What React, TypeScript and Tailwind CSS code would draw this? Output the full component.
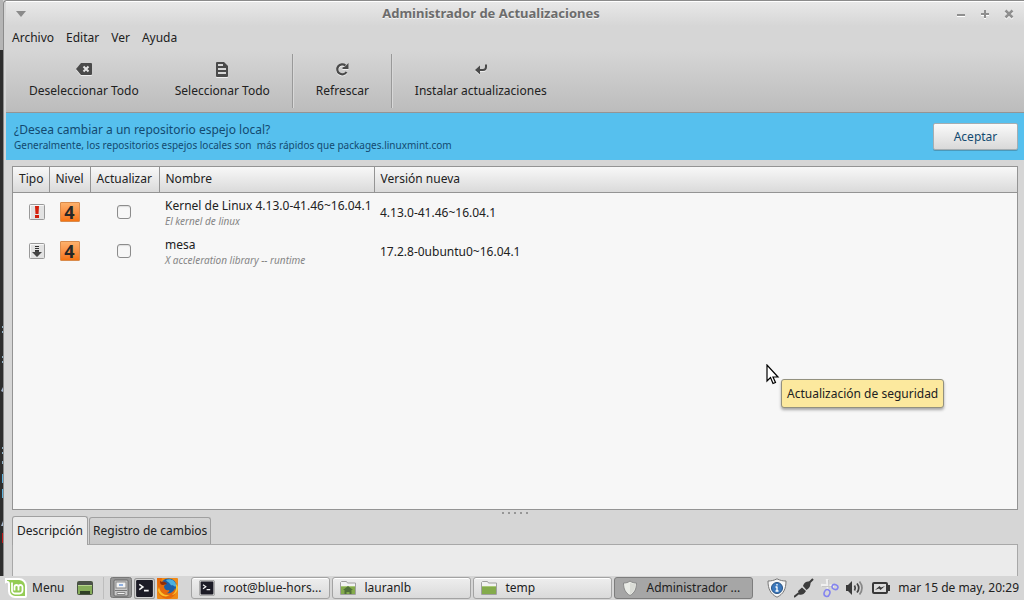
import { useState, type ReactNode } from "react";
import clsx from "clsx";

interface Update {
  id: string;
  kind: "security" | "package";
  level: number;
  name: string;
  description: string;
  version: string;
}

const MENUS = ["Archivo", "Editar", "Ver", "Ayuda"];

const UPDATES: Update[] = [
  {
    id: "linux-kernel",
    kind: "security",
    level: 4,
    name: "Kernel de Linux 4.13.0-41.46~16.04.1",
    description: "El kernel de linux",
    version: "4.13.0-41.46~16.04.1",
  },
  {
    id: "mesa",
    kind: "package",
    level: 4,
    name: "mesa",
    description: "X acceleration library -- runtime",
    version: "17.2.8-0ubuntu0~16.04.1",
  },
];

// ── Toolbar icons
const ClearIcon = () => (
  <svg width="16" height="16" viewBox="0 0 16 16" className="drop-shadow-[0_1px_0_#eeeeee]">
    <path d="M0 8 5 2h10a1 1 0 0 1 1 1v10a1 1 0 0 1-1 1H5z" fill="#4a4a4a" />
    <path d="m7.500 5.500 5 5m0-5-5 5" stroke="#e4e4e4" strokeWidth="2" />
  </svg>
);

const SelectIcon = () => (
  <svg width="16" height="16" viewBox="0 0 16 16" className="drop-shadow-[0_1px_0_#eeeeee]">
    <path d="M2 2a1 1 0 0 1 1-1h7l4 4v10a1 1 0 0 1-1 1H3a1 1 0 0 1-1-1z" fill="#4a4a4a" />
    <path d="M4 4h5M4 8h8M4 12h8" stroke="#d6d6d6" strokeWidth="2" />
  </svg>
);

const RefreshIcon = () => (
  <svg width="16" height="16" viewBox="0 0 16 16" className="drop-shadow-[0_1px_0_#eeeeee]">
    <path d="M11.500 4.500A5 5 0 1 0 12.500 11" fill="none" stroke="#4a4a4a" strokeWidth="2.200" />
    <path d="M14.500 2v6H8.500V6.500L11 5.500z" fill="#4a4a4a" />
  </svg>
);

const ReturnIcon = () => (
  <svg width="16" height="16" viewBox="0 0 16 16" className="drop-shadow-[0_1px_0_#eeeeee]">
    <path d="M13 3.500v2.500a3 3 0 0 1-3 3H5" fill="none" stroke="#4a4a4a" strokeWidth="2" />
    <path d="m2 9 5-4.500v9z" fill="#4a4a4a" />
  </svg>
);

// ── Update type icons
const SecurityIcon = () => (
  <svg width="16" height="16" viewBox="0 0 16 16" className="mx-auto">
    <rect x="0.500" y="0.500" width="15" height="15" rx="1" fill="#e2e2e2" stroke="#999" />
    <path d="M1.500 14.500v-13h13" fill="none" stroke="#f8f8f8" />
    <path d="M6 2h4l-.500 8h-3zM6 11h4v3H6z" fill="#d4200c" />
  </svg>
);

const PackageIcon = () => (
  <svg width="16" height="16" viewBox="0 0 16 16" className="mx-auto">
    <rect x="0.500" y="0.500" width="15" height="15" rx="1" fill="#e2e2e2" stroke="#999" />
    <path d="M1.500 14.500v-13h13" fill="none" stroke="#f8f8f8" />
    <path d="M6 3.500h4M6 5.500h4M6 7.500h4" stroke="#333" />
    <path d="M6 8h4v1h3l-5 5-5-5h3z" fill="#444" />
  </svg>
);

// ── Panel icons
const MintLogo = () => (
  <svg width="22" height="20" viewBox="0 0 22 20">
    <path d="M1 1h13a7 7 0 0 1 7 7v10a1 1 0 0 1-1 1H10a6 6 0 0 1-6-6V6a2 2 0 0 0-3-2z" fill="#94cc55" stroke="#fff" strokeWidth="2" />
    <path d="M7 4.500v8a3 3 0 0 0 3 3h4.500a3 3 0 0 0 3-3V9a2 2 0 0 0-4 0v3.500M13.500 9a2 2 0 0 0-4 0v3.500" fill="none" stroke="#fff" strokeWidth="1.800" />
  </svg>
);

const DesktopIcon = () => (
  <svg width="16" height="14" viewBox="0 0 16 14">
    <rect x="0.500" y="0.500" width="15" height="13" rx="1" fill="#86ad5a" stroke="#4a5344" />
    <path d="M1 1h14v3H1z" fill="#4b504a" />
    <path d="M1 4.500h14" stroke="#b7d48f" />
    <path d="M3 10h10v3H3z" fill="#2f4026" />
  </svg>
);

const FilesIcon = () => (
  <svg width="22" height="22" viewBox="0 0 22 22">
    <rect x="0.500" y="0.500" width="21" height="20" rx="2" fill="#959595" stroke="#787878" />
    <rect x="4" y="3" width="14" height="16" rx="1" fill="#c9c9c9" stroke="#666" />
    <rect x="6" y="5" width="10" height="6" fill="#f2f2f2" stroke="#888" />
    <path d="M9 7h4v2H9z" fill="#8fb0e0" />
    <path d="M5 13.500h12" stroke="#777" />
    <path d="M7 15.500h8v2H7z" fill="#f2f2f2" stroke="#888" />
  </svg>
);

const TerminalIcon = ({ size }: { size: number }) => (
  <svg width={size} height={size} viewBox="0 0 20 20">
    <rect x="0.500" y="0.500" width="19" height="19" rx="2" fill="#d2d2d2" stroke="#999" />
    <rect x="2" y="2" width="16" height="16" rx="1" fill="#1c1b26" />
    <path d="m5 6 3.500 2.500L5 11M9.500 12h4.500" fill="none" stroke="#f4f4f4" strokeWidth="1.500" />
  </svg>
);

const FirefoxIcon = () => (
  <svg width="21" height="21" viewBox="0 0 21 21">
    <rect width="21" height="21" rx="1" fill="#ef8a16" />
    <circle cx="11.500" cy="9" r="8.500" fill="#1c5fa8" />
    <path d="M9 2c4-2 9 0 10 5 0 2-1 2-2 1s-3 0-4-2-3-2-4-4z" fill="#4cb0e0" />
    <path d="M0 0h5L4 4c2-1 4 0 5 2L7 8c0 3 2 5 5 4 1 1-1 3-3 3 4 1 8-1 9-5 2 4 0 8-4 10S3 20 1 14z" fill="#e66a0c" />
    <path d="M2 9c1 6 6 9 11 8-4 3-11 1-12-5z" fill="#fbc22d" />
    <path d="M18 4c2 5 1 10-3 13 3 0 6-4 6-8z" fill="#fbc22d" />
    <path d="M3 3c0 3 1 4 3 4l4-1C8 3 6 4 5 4z" fill="#8d2c0c" />
  </svg>
);

const FolderIcon = ({ home }: { home?: boolean }) => (
  <svg width="16" height="16" viewBox="0 0 16 16">
    <path d="M.500 14.500v-12l1-1h5l1 1.500h8v11.500z" fill="#f2f2f2" stroke="#a0a0a0" />
    <path d="M1 6h14v8H1z" fill="#84ab4c" />
    <path d="M1 6.500h14" stroke="#a9c878" />
    {home && <path d="m8 6-5 4h1.500v4h2v-2h3v2h2v-4H13z" fill="#50703a" />}
  </svg>
);

const ShieldIcon = () => (
  <svg width="16" height="16" viewBox="0 0 16 16">
    <path d="M8 1c2 1.500 4 2 6.500 2 0 6-2 10-6.500 12.500C3.500 13 1.500 9 1.500 3 4 3 6 2.500 8 1z" fill="#e9ebe6" stroke="#8a8a8a" />
    <path d="M8 2.500v12C11 12.500 13 9 13.500 4 11 4 9.500 3.500 8 2.500z" fill="#dadcd6" />
  </svg>
);

const InfoShieldIcon = () => (
  <svg width="20" height="20" viewBox="0 0 20 20">
    <path d="M10 .800c3 1.700 6 2.200 9 2.200 0 8-2.500 13-9 16.200C3.500 16 1 11 1 3c3 0 6-.500 9-2.200z" fill="#f6f6f6" stroke="#777" />
    <circle cx="10" cy="10" r="5.500" fill="#3b78bd" stroke="#285384" />
    <path d="M10 6v1.500M10 8.500v4.500M8.500 13h3M8.500 9H10" stroke="#fff" strokeWidth="1.300" />
  </svg>
);

const PlugIcon = () => (
  <svg width="20" height="20" viewBox="0 0 20 20">
    <path d="M0 19 5 15M15 5l4-4" stroke="#3c3c3c" strokeWidth="2" />
    <path d="m4 13 4-3.500 4 3.500c-2 4-5 4-7 3.500zM9 8c1-4 4-5 6.500-4.500l1 1.500c0 3-1 5-4 7z" fill="#3c3c3c" />
  </svg>
);

const ScissorsIcon = () => (
  <svg width="18" height="20" viewBox="0 0 18 20">
    <path d="m6 1 1 11M0 7l13 1" stroke="#f0f0f0" strokeWidth="2.500" />
    <path d="m7.500 2 .500 9M1 8.500h10" stroke="#c6c6c6" />
    <ellipse cx="14" cy="9" rx="3" ry="2.500" fill="none" stroke="#8484ef" strokeWidth="1.600" transform="rotate(20 14 9)" />
    <ellipse cx="6" cy="15" rx="2.800" ry="3.500" fill="none" stroke="#8484ef" strokeWidth="1.600" transform="rotate(20 6 15)" />
  </svg>
);

const VolumeIcon = () => (
  <svg width="19" height="16" viewBox="0 0 19 16">
    <path d="M0 5h2l4-4v14l-4-4H0z" fill="#3a3a3a" />
    <path d="M8.500 5.500q1.500 2.500 0 5M11 3.500q3.500 4.500 0 9" fill="none" stroke="#444" strokeWidth="1.700" />
    <path d="M13.500 1.500q5 6.500 0 13" fill="none" stroke="#888" strokeWidth="1.700" />
  </svg>
);

const BatteryIcon = () => (
  <svg width="19" height="14" viewBox="0 0 19 14">
    <rect x="1" y="2" width="14" height="10" rx="1" fill="#dcdcdc" stroke="#383838" strokeWidth="2" />
    <path d="M16 4h2v6h-2z" fill="#383838" />
    <path d="m3 9 4.500-4 1.500 1.500L13 5 8.500 9 7 7.500z" fill="#383838" />
  </svg>
);

// ── Strip of the terminal window left uncovered behind this one
const TerminalEdge = () => (
  <svg width="3" height="576" viewBox="0 0 3 576" className="shrink-0">
    <path d="M0 0h3v50H0z" fill="#b5b5b5" />
    <path d="M0 50h3v526H0z" fill="#2d2d2d" />
    <path d="M2 326h1v2H2zM2 331h1v2H2zM2 356h1v2H2zM2 361h1v2H2zM2 447h1v2H2zM2 452h1v2H2zM2 461h1v3H2z" fill="#8fb0c4" />
    <path d="M2 474h1v9H2zM2 489h1v9H2z" fill="#5fb3dd" />
    <path d="M1 391l2-4v5zM1 526l2-5v5z" fill="#a8b9cf" />
    <path d="M2 533h1v10H2z" fill="#c01818" />
  </svg>
);

const ToolButton = ({ icon, label }: { icon: ReactNode; label: string }) => (
  <button className="flex flex-col items-center gap-1.5 px-[18px] pt-[11px]">
    {icon}
    <span className="leading-4">{label}</span>
  </button>
);

const ToolSeparator = () => (
  <div className="mx-1 my-1 w-0.5 border-l border-[#999999] bg-[#d8d8d8]" />
);

const TaskButton = ({ icon, label, active }: { icon: ReactNode; label: string; active?: boolean }) => (
  <button
    className={clsx(
      "flex h-[22px] max-w-[139px] min-w-0 flex-1 items-center gap-2 rounded-[3px] border px-[7px]",
      active
        ? "border-[#7d7d7d] bg-[#a6a6a6]"
        : "border-[#a3a3a3] bg-linear-to-b from-[#eeeeee] to-[#dadada] shadow-[inset_0_1px_0_#ffffff]"
    )}
  >
    <span className="shrink-0">{icon}</span>
    <span className="whitespace-nowrap">{label}</span>
  </button>
);

export default function App() {
  const [selected, setSelected] = useState<string[]>([]);
  const [tab, setTab] = useState("Descripción");

  const toggle = (id: string) =>
    setSelected((prev) => (prev.includes(id) ? prev.filter((i) => i !== id) : [...prev, id]));

  return (
    <div className="relative flex h-screen flex-col overflow-hidden bg-[#d6d6d6] font-['Noto_Sans',sans-serif] text-[12px] text-[#212121]">
      <div className="flex min-h-0 flex-1">
        <TerminalEdge />
        <div className="flex min-w-0 flex-1 flex-col rounded-tl-[4px] border-t border-l border-[#8b8b8b] pl-0.5">
          {/* Title bar */}
          <header className="flex h-[25px] shrink-0 items-center border-t border-white bg-linear-to-b from-[#e8e8e8] to-[#d6d6d6] px-2.5">
            <button aria-label="Menú de la ventana">
              <svg width="10" height="6" viewBox="0 0 10 6">
                <path d="M0 0h10L5 6z" fill="#8a8a8a" />
              </svg>
            </button>
            <h1 className="flex-1 text-center text-[13px] font-bold text-[#6c6c6c] [text-shadow:0_1px_0_#f4f4f4]">
              Administrador de Actualizaciones
            </h1>
            <div className="flex gap-[14px] text-[#8f8f8f]">
              <button aria-label="Minimizar">
                <svg width="10" height="10" viewBox="0 0 10 10" className="drop-shadow-[0_1px_0_#ffffff]">
                  <path d="M1 6h8" stroke="currentColor" strokeWidth="2" />
                </svg>
              </button>
              <button aria-label="Maximizar">
                <svg width="10" height="10" viewBox="0 0 10 10" className="drop-shadow-[0_1px_0_#ffffff]">
                  <path d="M1 5h8M5 1v8" stroke="currentColor" strokeWidth="2" />
                </svg>
              </button>
              <button aria-label="Cerrar">
                <svg width="10" height="10" viewBox="0 0 10 10" className="drop-shadow-[0_1px_0_#ffffff]">
                  <path d="m1.500 1.500 7 7m0-7-7 7" stroke="currentColor" strokeWidth="2.500" />
                </svg>
              </button>
            </div>
          </header>

          {/* Menu bar */}
          <nav className="flex h-6 shrink-0 items-center gap-3 px-1.5">
            {MENUS.map((menu) => (
              <button key={menu}>{menu}</button>
            ))}
          </nav>

          {/* Toolbar */}
          <div className="flex h-[63px] shrink-0 items-stretch border-b border-[#949494] bg-linear-to-b from-[#d6d6d6] to-[#bcbcbc] px-[5px]">
            <ToolButton icon={<ClearIcon />} label="Deseleccionar Todo" />
            <ToolButton icon={<SelectIcon />} label="Seleccionar Todo" />
            <ToolSeparator />
            <ToolButton icon={<RefreshIcon />} label="Refrescar" />
            <ToolSeparator />
            <ToolButton icon={<ReturnIcon />} label="Instalar actualizaciones" />
          </div>

          {/* Mirror suggestion */}
          <div className="flex h-[47px] shrink-0 items-center justify-between bg-[#56c0ee] pr-1.5 pl-2 text-[#134a70]">
            <div className="leading-4">
              <p>¿Desea cambiar a un repositorio espejo local?</p>
              <p className="text-[10px] leading-[14px] whitespace-pre">
                Generalmente, los repositorios espejos locales son  más rápidos que packages.linuxmint.com
              </p>
            </div>
            <button className="h-[27px] w-[85px] rounded-[2px] border border-[#a5adb1] bg-linear-to-b from-[#fafafa] to-[#d9d9d9] shadow-[0_1px_0_#4b98b9]">
              Aceptar
            </button>
          </div>

          {/* Update list */}
          <div className="mx-1.5 mt-1.5 min-h-0 flex-1 border border-[#949494] bg-[#f7f7f7]">
            <table className="w-full table-fixed border-collapse text-left">
              <thead>
                <tr className="h-[25px] bg-linear-to-b from-[#f8f8f8] to-[#dadada] whitespace-nowrap">
                  <th className="w-9 border-r border-b border-[#949494] pl-1.5 font-normal">Tipo</th>
                  <th className="w-[41px] border-r border-b border-[#949494] pl-1.5 font-normal">Nivel</th>
                  <th className="w-[69px] border-r border-b border-[#949494] pl-1.5 font-normal">Actualizar</th>
                  <th className="w-[215px] border-r border-b border-[#949494] pl-1.5 font-normal">Nombre</th>
                  <th className="border-b border-[#949494] pl-1.5 font-normal">Versión nueva</th>
                </tr>
              </thead>
              <tbody>
                {UPDATES.map((update) => (
                  <tr key={update.id} className="h-[39px]">
                    <td className="pl-3">{update.kind === "security" ? <SecurityIcon /> : <PackageIcon />}</td>
                    <td>
                      <span className="mx-auto flex size-5 items-center justify-center rounded-[1px] border border-[#d98b4c] bg-linear-to-b from-[#fdb06a] to-[#f57410] text-[18px] leading-4 font-bold text-[#262626]">
                        {update.level}
                      </span>
                    </td>
                    <td className="pr-0.5">
                      <input
                        type="checkbox"
                        aria-label={`Actualizar ${update.name}`}
                        checked={selected.includes(update.id)}
                        onChange={() => toggle(update.id)}
                        className="mx-auto block size-3.5 appearance-none rounded-[3px] border border-[#8c8c8c] bg-[#f7f7f7] shadow-[inset_0_1px_1px_#dddddd] checked:bg-[#8bb158]"
                      />
                    </td>
                    <td className="pt-0.5 pl-1.5 leading-4 whitespace-nowrap">
                      <div>{update.name}</div>
                      <div className="text-[10px] leading-[14px] text-[#858585] italic">{update.description}</div>
                    </td>
                    <td className="pt-0.5 pl-1.5">{update.version}</td>
                  </tr>
                ))}
              </tbody>
            </table>
          </div>

          {/* Pane handle */}
          <div className="flex h-1.5 shrink-0 items-center justify-center gap-1">
            {[0, 1, 2, 3, 4].map((dot) => (
              <span key={dot} className="size-0.5 bg-[#969696]" />
            ))}
          </div>

          {/* Details notebook */}
          <div role="tablist" className="mx-1.5 flex h-7 shrink-0 items-end gap-px">
            {["Descripción", "Registro de cambios"].map((name) => (
              <button
                key={name}
                role="tab"
                aria-selected={tab === name}
                onClick={() => setTab(name)}
                className={clsx(
                  "rounded-t-[3px] border border-b-0 border-[#a0a0a0]",
                  tab === name
                    ? "relative -mb-px h-[29px] bg-[#ebebeb] px-1"
                    : "h-[27px] bg-linear-to-b from-[#d4d4d4] to-[#c8c8c8] px-[3px]"
                )}
              >
                {name}
              </button>
            ))}
          </div>
          <div role="tabpanel" aria-label={tab} className="mx-1.5 h-8 shrink-0 border border-b-0 border-[#a8a8a8] bg-[#ebebeb]" />
        </div>
      </div>

      {/* Desktop panel */}
      <footer className="flex h-6 shrink-0 items-center bg-[#d6d6d6] px-[5px]">
        <button className="flex items-center gap-[5px]">
          <MintLogo />
          Menu
        </button>
        <button aria-label="Mostrar el escritorio" className="ml-[13px]">
          <DesktopIcon />
        </button>
        <div className="ml-2.5 flex items-center gap-0.5 border-l border-[#bdbdbd] pl-1.5">
          <button aria-label="Archivos">
            <FilesIcon />
          </button>
          <button aria-label="Terminal">
            <TerminalIcon size={21} />
          </button>
          <button aria-label="Firefox">
            <FirefoxIcon />
          </button>
        </div>
        <div className="ml-[13px] flex min-w-0 flex-1 gap-0.5">
          <TaskButton icon={<TerminalIcon size={16} />} label="root@blue-hors..." />
          <TaskButton icon={<FolderIcon home />} label="lauranlb" />
          <TaskButton icon={<FolderIcon />} label="temp" />
          <TaskButton icon={<ShieldIcon />} label="Administrador ..." active />
        </div>
        <div className="flex shrink-0 items-center gap-[7px]">
          <InfoShieldIcon />
          <PlugIcon />
          <ScissorsIcon />
          <VolumeIcon />
          <BatteryIcon />
          <time className="whitespace-nowrap">mar 15 de may, 20:29</time>
        </div>
      </footer>

      {/* Pointer and its tooltip */}
      <svg width="14" height="21" viewBox="0 0 14 21" className="absolute top-[364px] left-[766px]">
        <path d="M1 1v16l3.500-3.500 2.500 6 2.500-1-2.500-5.500h5z" fill="#fff" stroke="#000" strokeWidth="1.200" />
      </svg>
      <div
        role="tooltip"
        className="absolute top-[379px] left-[781px] rounded-[3px] border border-[#93917f] bg-[#fce99e] px-[5px] py-1.5 leading-[15px] whitespace-nowrap shadow-[0_2px_3px_#00000055]"
      >
        Actualización de seguridad
      </div>
    </div>
  );
}
